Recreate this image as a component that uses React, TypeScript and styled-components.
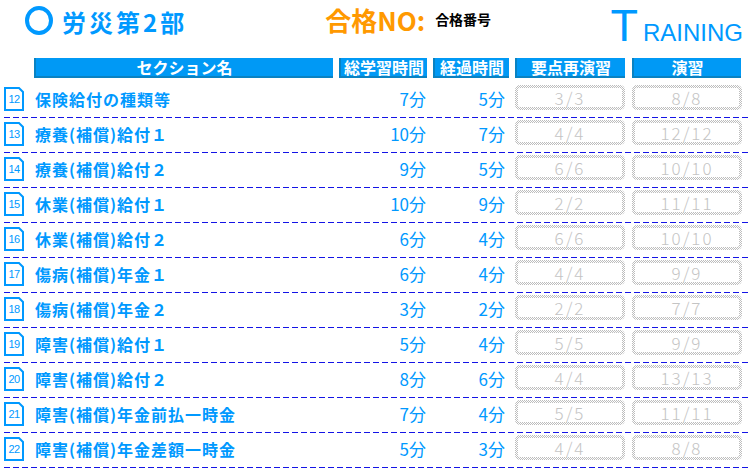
import React from "react";
import styled, { createGlobalStyle } from "styled-components";

const Global = createGlobalStyle`
  html, body { margin: 0; padding: 0; background: #fff; }
  body { font-family: "Noto Sans CJK JP", "Noto Sans", sans-serif; }
`;

const BLUE = "#0099ff";

const Page = styled.div`
  width: 751px;
  height: 470px;
  overflow: hidden;
  background: #fff;
`;

const TitleBar = styled.header`
  height: 58px;
  display: flex;
  align-items: flex-start;
  padding-left: 25px;
  box-sizing: border-box;
`;

const Ring = styled.span`
  width: 28px;
  height: 29px;
  margin-top: 6px;
  box-sizing: border-box;
  border: 4px solid ${BLUE};
  border-radius: 50%;
  flex: none;
`;

const Title = styled.h1`
  flex: none;
  margin: 5px 0 0 9px;
  font-size: 24px;
  line-height: 34px;
  font-weight: 700;
  color: ${BLUE};
  letter-spacing: 3px;
  white-space: nowrap;
`;

const PassLabel = styled.div`
  flex: none;
  margin: 1px 0 0 138px;
  font-size: 26px;
  line-height: 38px;
  font-weight: 700;
  color: #ff9900;
  white-space: nowrap;
`;

const PassValue = styled.div`
  flex: none;
  margin: 8px 0 0 10px;
  font-size: 14px;
  line-height: 22px;
  font-weight: 700;
  color: #000;
  white-space: nowrap;
`;

const Brand = styled.div`
  flex: none;
  margin-left: auto;
  margin-right: 8px;
  font-family: "Liberation Sans", Arial, sans-serif;
  font-size: 45px;
  line-height: 51px;
  color: ${BLUE};
  white-space: nowrap;
`;

const BrandBig = styled.span`
  font-size: 45px;
`;

const BrandSmall = styled.span`
  font-size: 24px;
  margin-left: 5px;
`;

const HeaderRow = styled.div`
  display: grid;
  grid-template-columns: 299px 88px 76px 110px 110px;
  column-gap: 6px;
  padding-left: 34px;
  height: 20px;
`;

const HeadCell = styled.div<{ $shift?: number }>`
  background: #0099f5;
  border-left: 2px solid #0a82c2;
  border-bottom: 2px solid #0a82c2;
  box-sizing: border-box;
  color: #fff;
  font-size: 16px;
  font-weight: 700;
  line-height: 18px;
  text-align: center;
  white-space: nowrap;
  margin-left: ${(p) => p.$shift ?? 0}px;
`;

const List = styled.div`
  margin-top: 5px;
`;

const Row = styled.div`
  display: grid;
  grid-template-columns: 24px 299px 88px 76px 110px 111px;
  column-gap: 6px;
  align-items: center;
  height: 35px;
  box-sizing: border-box;
  margin-left: 4px;
  width: 744px;
  background-image: repeating-linear-gradient(
    to right,
    #1414e6 0 6px,
    transparent 6px 9px
  );
  background-size: 100% 1px;
  background-position: 0 bottom;
  background-repeat: no-repeat;
`;

const Badge = styled.svg`
  display: block;
  margin-top: -4px;
`;

const Label = styled.div`
  margin-left: 1px;
  margin-top: -4px;
  font-size: 16px;
  font-weight: 700;
  color: ${BLUE};
  letter-spacing: 1px;
  white-space: nowrap;
`;

const Minutes = styled.div<{ $pad: number }>`
  text-align: right;
  padding-right: ${(p) => p.$pad}px;
  margin-top: -4px;
  font-size: 17px;
  color: ${BLUE};
  white-space: nowrap;
`;

const ScoreOuter = styled.div<{ $shift?: number }>`
  height: 25px;
  margin-top: -6px;
  margin-left: ${(p) => p.$shift ?? 0}px;
  width: 110px;
  box-sizing: border-box;
  padding: 3px;
  border-radius: 5px;
  background: repeating-conic-gradient(#bdbdbd 0 25%, #ffffff 0 50%) 0 0 / 2px 2px;
`;

const ScoreInner = styled.div`
  height: 100%;
  background: #fff;
  border-radius: 2px;
  display: flex;
  align-items: center;
  justify-content: center;
  font-size: 17px;
  font-weight: 300;
  letter-spacing: 2px;
  color: #c4c4c4;
  white-space: nowrap;
`;

type Item = {
  no: number;
  name: string;
  total: string;
  elapsed: string;
  review: string;
  drill: string;
};

const items: Item[] = [
  { no: 12, name: "保険給付の種類等", total: "7分", elapsed: "5分", review: "3/3", drill: "8/8" },
  { no: 13, name: "療養(補償)給付１", total: "10分", elapsed: "7分", review: "4/4", drill: "12/12" },
  { no: 14, name: "療養(補償)給付２", total: "9分", elapsed: "5分", review: "6/6", drill: "10/10" },
  { no: 15, name: "休業(補償)給付１", total: "10分", elapsed: "9分", review: "2/2", drill: "11/11" },
  { no: 16, name: "休業(補償)給付２", total: "6分", elapsed: "4分", review: "6/6", drill: "10/10" },
  { no: 17, name: "傷病(補償)年金１", total: "6分", elapsed: "4分", review: "4/4", drill: "9/9" },
  { no: 18, name: "傷病(補償)年金２", total: "3分", elapsed: "2分", review: "2/2", drill: "7/7" },
  { no: 19, name: "障害(補償)給付１", total: "5分", elapsed: "4分", review: "5/5", drill: "9/9" },
  { no: 20, name: "障害(補償)給付２", total: "8分", elapsed: "6分", review: "4/4", drill: "13/13" },
  { no: 21, name: "障害(補償)年金前払一時金", total: "7分", elapsed: "4分", review: "5/5", drill: "11/11" },
  { no: 22, name: "障害(補償)年金差額一時金", total: "5分", elapsed: "3分", review: "4/4", drill: "8/8" },
];

const NumBadge = ({ n }: { n: number }) => (
  <Badge width="20" height="24" viewBox="0 0 20 24">
    <path d="M1 1 H15 L19 5 V23 H1 Z" fill="#fff" stroke={BLUE} strokeWidth="2" />
    <text
      x="10"
      y="16"
      textAnchor="middle"
      fontSize="11"
      fontFamily="Liberation Sans, Arial, sans-serif"
      fill={BLUE}
      letterSpacing="-0.5"
    >
      {n}
    </text>
  </Badge>
);

export default function App() {
  return (
    <Page>
      <Global />
      <TitleBar>
        <Ring />
        <Title>労災第2部</Title>
        <PassLabel>合格NO:</PassLabel>
        <PassValue>合格番号</PassValue>
        <Brand>
          <BrandBig>T</BrandBig>
          <BrandSmall>RAINING</BrandSmall>
        </Brand>
      </TitleBar>
      <HeaderRow>
        <HeadCell>セクション名</HeadCell>
        <HeadCell>総学習時間</HeadCell>
        <HeadCell>経過時間</HeadCell>
        <HeadCell>要点再演習</HeadCell>
        <HeadCell $shift={1}>演習</HeadCell>
      </HeaderRow>
      <List>
        {items.map((it) => (
          <Row key={it.no}>
            <NumBadge n={it.no} />
            <Label>{it.name}</Label>
            <Minutes $pad={1}>{it.total}</Minutes>
            <Minutes $pad={4}>{it.elapsed}</Minutes>
            <ScoreOuter>
              <ScoreInner>{it.review}</ScoreInner>
            </ScoreOuter>
            <ScoreOuter $shift={1}>
              <ScoreInner>{it.drill}</ScoreInner>
            </ScoreOuter>
          </Row>
        ))}
      </List>
    </Page>
  );
}
